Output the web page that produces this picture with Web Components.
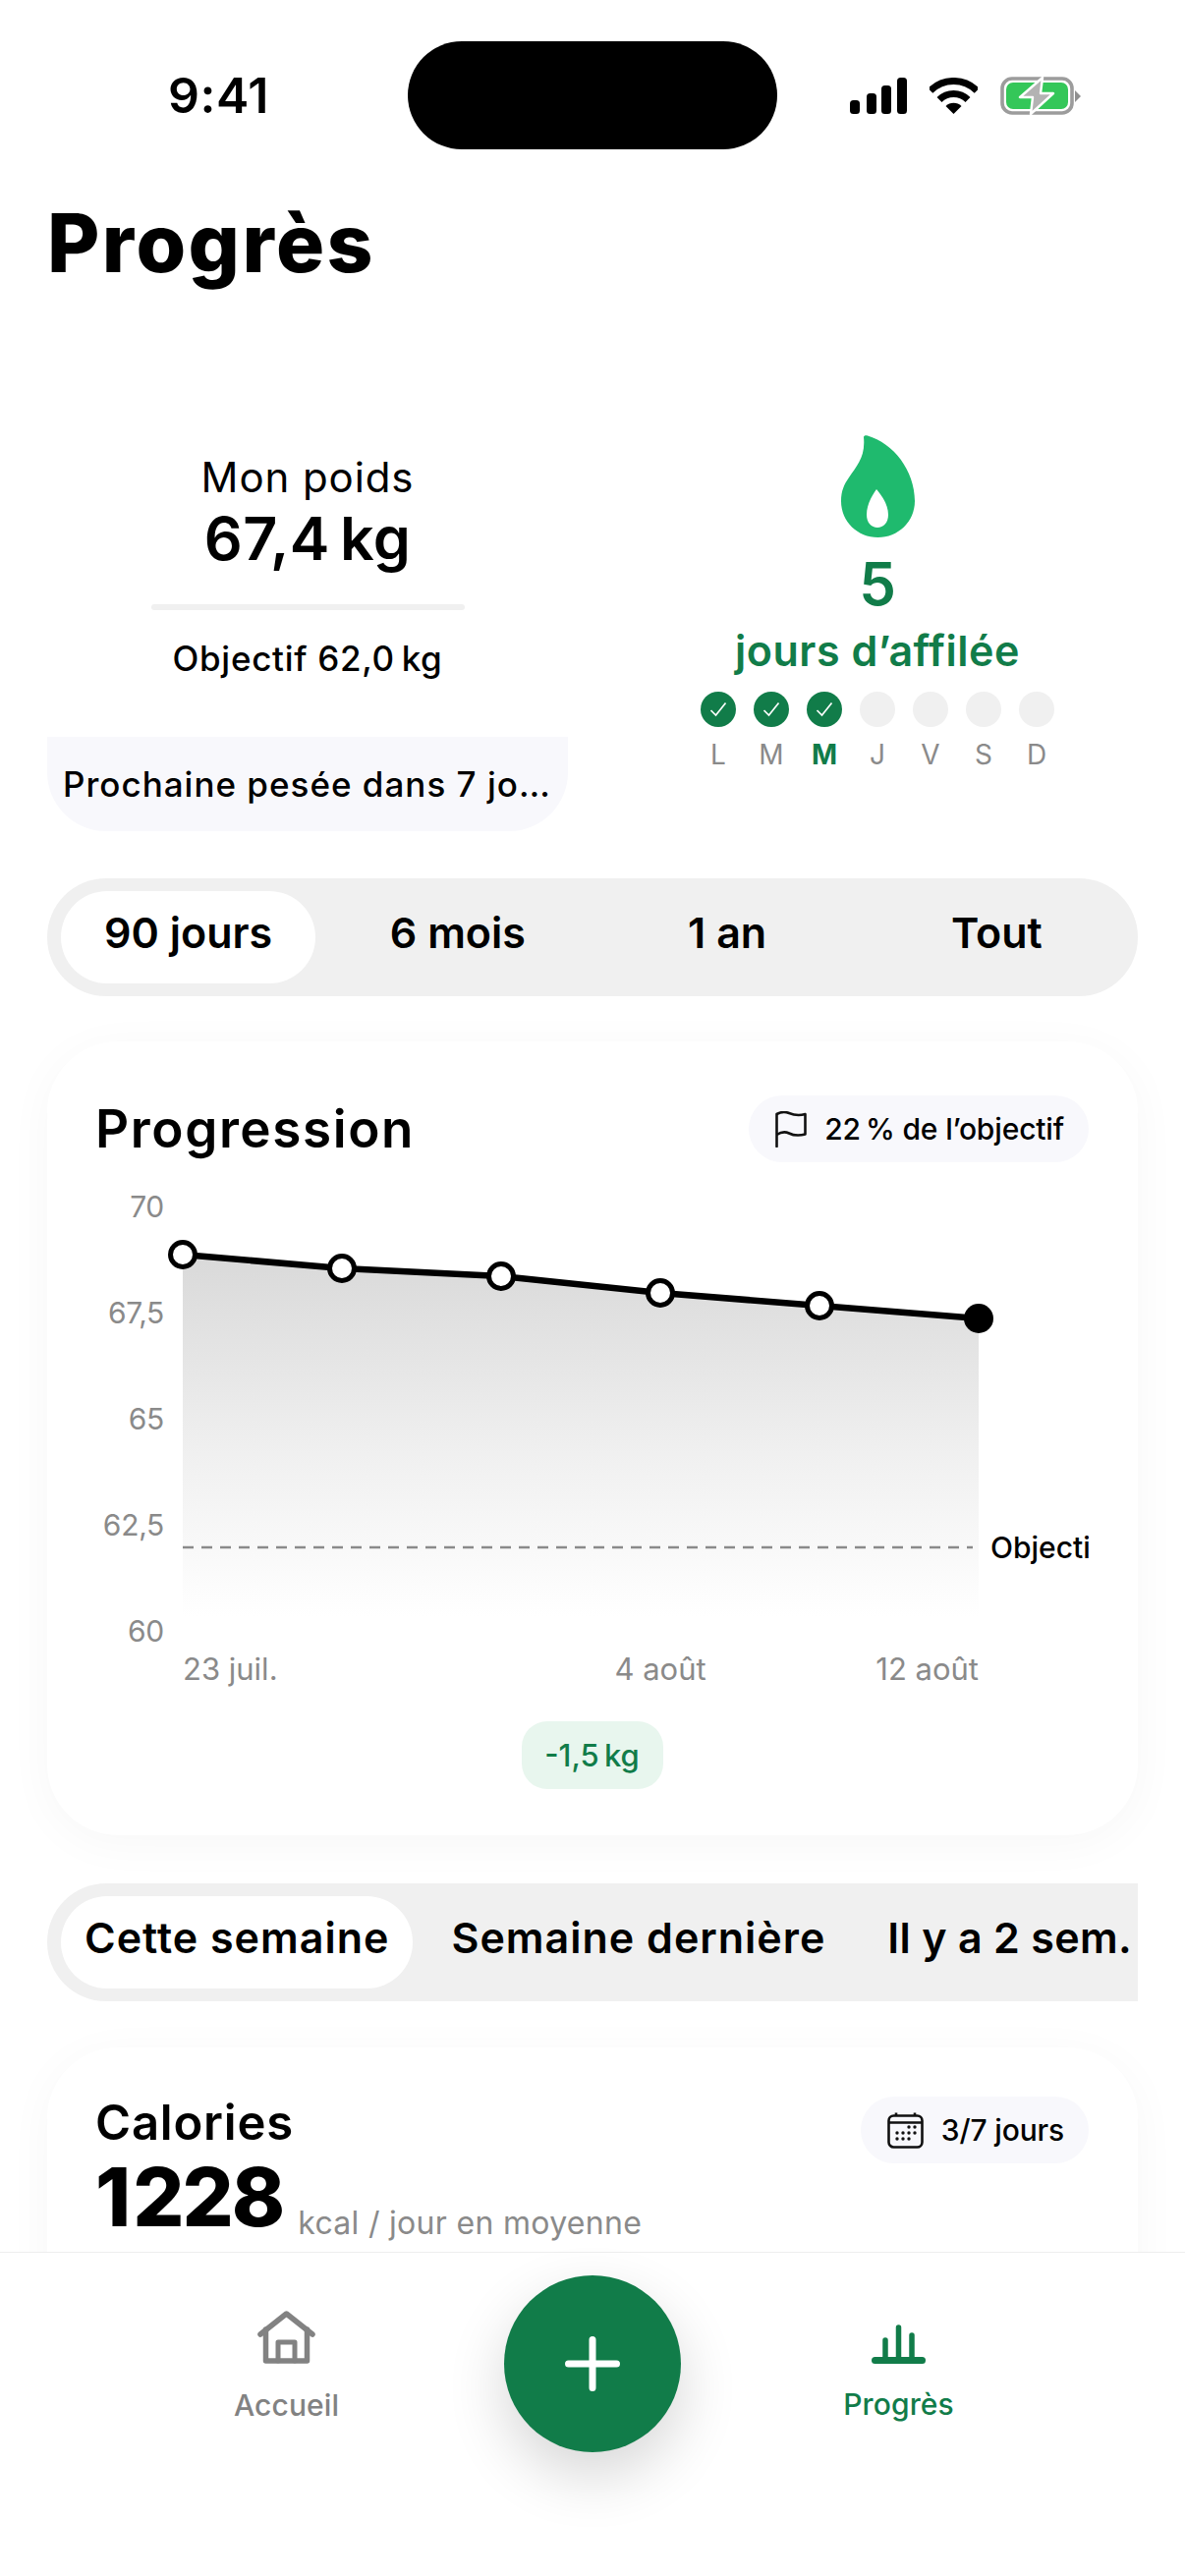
<!DOCTYPE html>
<html lang="fr">
<head>
<meta charset="utf-8">
<title>Progrès</title>
<style>
  html, body { margin: 0; padding: 0; background: #fff; }
  body { font-family: Inter, "Liberation Sans", sans-serif; color: #000; }
</style>
</head>
<body>
<app-screen>
  <app-status-bar></app-status-bar>
  <page-title>Progrès</page-title>
  <summary-row>
    <weight-summary slot="left"></weight-summary>
    <streak-summary slot="right"></streak-summary>
  </summary-row>
  <seg-control items="90 jours|6 mois|1 an|Tout" equal></seg-control>
  <progress-card></progress-card>
  <seg-control items="Cette semaine|Semaine dernière|Il y a 2 sem." style="margin-top:49px"></seg-control>
  <calories-card></calories-card>
  <tab-bar></tab-bar>
</app-screen>

<script>
class BaseComponent extends HTMLElement {
  constructor() {
    super();
    this.attachShadow({ mode: 'open' });
  }

  connectedCallback() {
    this.render();
  }

  render(template) {
    this.shadowRoot.innerHTML = template;
  }
}

class AppScreen extends BaseComponent {
  render() {
    super.render(`
      <style>
        :host {
          display: block;
          position: relative;
          width: 1206px;
          height: 2622px;
          overflow: hidden;
          background: #fff;
        }
      </style>
      <slot></slot>
    `);
  }
}

class AppStatusBar extends BaseComponent {
  render() {
    super.render(`
      <style>
        :host { display: flex; padding-top: 42px; height: 110px; }
        .time {
          width: 415px;
          box-sizing: border-box;
          padding-left: 171px;
          display: flex;
          align-items: center;
          font: 600 50px/110px Inter, sans-serif;
          letter-spacing: 0.5px;
        }
        .island { width: 376px; height: 110px; border-radius: 55px; background: #000; }
        .icons {
          width: 415px;
          box-sizing: border-box;
          padding-left: 74px;
          display: flex;
          align-items: center;
        }
        svg { display: block; }
      </style>
      <div class="time">9:41</div>
      <div class="island"></div>
      <div class="icons">
        <svg width="58" height="37" viewBox="0 0 58 37">
          <rect x="0" y="23" width="10" height="14" rx="3.5"/>
          <rect x="17" y="16" width="10" height="21" rx="3.5"/>
          <rect x="32" y="8" width="10" height="29" rx="3.5"/>
          <rect x="48" y="0" width="10" height="37" rx="3.5"/>
        </svg>
        <svg width="49" height="37" viewBox="0 0 49 37" style="margin-left:23px">
          <path d="M0.8 13.3A33.5 33.5 0 0 1 48.2 13.3" fill="none" stroke="#000" stroke-width="7"/>
          <path d="M10 22.5A20.5 20.5 0 0 1 39 22.5" fill="none" stroke="#000" stroke-width="7"/>
          <path d="M16.5 29A11.3 11.3 0 0 1 32.5 29L24.5 37Z"/>
        </svg>
        <svg width="82" height="39" viewBox="0 0 82 39" style="margin-left:23px">
          <rect x="2" y="2" width="71" height="35" rx="10" fill="#fff" stroke="#9c9c9c" stroke-width="3.6"/>
          <rect x="6" y="6" width="63" height="27" rx="7" fill="#34c759"/>
          <path d="M76 14L82 20L76 26Z" fill="#8f8f8f"/>
          <path d="M43 1L20 21L33 21L31 38L54 17L41 17Z" fill="#b3b3b3" stroke="#fff" stroke-width="2.4" stroke-linejoin="round"/>
        </svg>
      </div>
    `);
  }
}

class PageTitle extends BaseComponent {
  render() {
    super.render(`
      <style>
        :host {
          display: block;
          margin: 46px 0 0 48px;
          font: 800 82px/100px Inter, sans-serif;
          letter-spacing: 2.4px;
        }
      </style>
      <slot></slot>
    `);
  }
}

class SummaryRow extends BaseComponent {
  render() {
    super.render(`
      <style>
        :host {
          display: grid;
          grid-template-columns: 530px 530px;
          column-gap: 50px;
          margin: 145px 48px 0;
        }
      </style>
      <slot name="left"></slot>
      <slot name="right"></slot>
    `);
  }
}

class WeightSummary extends BaseComponent {
  render() {
    super.render(`
      <style>
        :host { display: flex; flex-direction: column; align-items: center; padding-top: 17px; }
        .label { font: 400 42px/52px Inter, sans-serif; letter-spacing: 0.9px; }
        .value { margin-top: 1px; font: 600 61px/70px Inter, sans-serif; letter-spacing: 0.3px; }
        .line { margin-top: 32px; width: 319px; height: 6px; border-radius: 3px; background: #f0f0f0; }
        .goal { margin-top: 27px; font: 450 35px/44px Inter, sans-serif; letter-spacing: 0.7px; }
        .next {
          margin-top: 58px;
          width: 530px;
          height: 96px;
          box-sizing: border-box;
          padding: 0 16px;
          border-radius: 0 0 60px 60px;
          background: #f8f8fc;
          font: 450 35px/96px Inter, sans-serif;
          letter-spacing: 1px;
          white-space: nowrap;
        }
      </style>
      <div class="label">Mon poids</div>
      <div class="value">67,4\u2009kg</div>
      <div class="line"></div>
      <div class="goal">Objectif 62,0\u2009kg</div>
      <div class="next">Prochaine pesée dans 7 jo…</div>
    `);
  }
}

class StreakSummary extends BaseComponent {
  render() {
    const days = ['L', 'M', 'M', 'J', 'V', 'S', 'D'];
    const dots = days.map((d, i) => `<span class="dot ${i < 3 ? 'on' : ''}">${i < 3
      ? '<svg width="18" height="16" viewBox="0 0 18 16"><path d="M1.5 9L6.5 14L16.5 1.5" fill="none" stroke="#fff" stroke-width="1.7"/></svg>'
      : ''}</span>`).join('');
    const labels = days.map((d, i) => `<span class="${i === 2 ? 'today' : ''}">${d}</span>`).join('');

    super.render(`
      <style>
        :host { display: flex; flex-direction: column; align-items: center; color: #117c49; }
        svg { display: block; }
        .count { margin-top: 12px; font: 600 60px/70px Inter, sans-serif; }
        .text { margin-top: 7px; font: 600 43px/52px Inter, sans-serif; letter-spacing: 0.5px; white-space: nowrap; }
        .grid { display: grid; grid-template-columns: repeat(7, 36px); column-gap: 18px; }
        .dots { margin-top: 16px; }
        .dot {
          width: 36px;
          height: 36px;
          border-radius: 50%;
          background: #f0f0f0;
          display: flex;
          align-items: center;
          justify-content: center;
        }
        .dot.on { background: #117c49; }
        .labels {
          margin-top: 11px;
          text-align: center;
          font: 400 28px/34px Inter, sans-serif;
          color: #8a8a8a;
        }
        .today { color: #117c49; font-weight: 700; }
      </style>
      <svg width="75" height="104" viewBox="0 0 75 104">
        <path fill="#1fba6e" fill-rule="evenodd" d="M23 2C23 .5 25 0 27 .6C53 8 75 36 75 67C75 88 58 104 37.5 104C17 104 0 88 0 67C0 57 3 50 8 43C16 31 25 22 23 2ZM36 55C31 62 26 71 26 81C26 89 31 94 37 94C43 94 48 89 48 81C48 71 42 62 36 55Z"/>
      </svg>
      <div class="count">5</div>
      <div class="text">jours d’affilée</div>
      <div class="grid dots">${dots}</div>
      <div class="grid labels">${labels}</div>
    `);
  }
}

class SegControl extends BaseComponent {
  render() {
    const items = this.getAttribute('items').split('|');
    const equal = this.hasAttribute('equal');
    const tabs = items.map((t, i) => `<div class="tab ${i === 0 ? 'active' : ''}">${t}</div>`).join('');

    super.render(`
      <style>
        :host {
          display: block;
          margin: 48px 48px 0;
          height: 120px;
          box-sizing: border-box;
          background: #f0f0f0;
          border-radius: ${equal ? '60px' : '60px 0 0 60px'};
          overflow: hidden;
        }
        .row {
          display: flex;
          gap: 15px;
          padding: 13px 14px;
          white-space: nowrap;
        }
        .tab {
          flex: ${equal ? '1 1 0' : '0 0 auto'};
          height: 94px;
          box-sizing: border-box;
          padding: 0 ${equal ? '0' : '24px'};
          border-radius: 47px;
          text-align: center;
          font: 600 43px/84px Inter, sans-serif;
          letter-spacing: ${equal ? '0' : '1px'};
        }
        .tab:nth-child(3) { letter-spacing: ${equal ? '0' : '0.3px'}; }
        .active { background: #fff; }
      </style>
      <div class="row">${tabs}</div>
    `);
  }
}

class InfoChip extends BaseComponent {
  render() {
    super.render(`
      <style>
        :host {
          display: inline-flex;
          align-items: center;
          height: 68px;
          box-sizing: border-box;
          padding: 0 25px 0 27px;
          gap: 18px;
          border-radius: 34px;
          background: #f8f8fc;
          font: 450 30px/68px Inter, sans-serif;
          letter-spacing: -0.15px;
          white-space: nowrap;
        }
        ::slotted(svg) { display: block; }
      </style>
      <slot name="icon"></slot>
      <slot></slot>
    `);
  }
}

class ProgressCard extends BaseComponent {
  render() {
    const pts = [[186, 1277], [348, 1291], [510, 1299], [672, 1316], [834, 1329], [996, 1342]];
    const line = pts.map(p => p.join(',')).join(' ');
    const circles = pts.map((p, i) => `<circle cx="${p[0]}" cy="${p[1]}" r="${i === 5 ? 15 : 12.5}" fill="${i === 5 ? '#000' : '#fff'}" stroke="#000" stroke-width="${i === 5 ? 0 : 5}"/>`).join('');
    const ticks = [['70', 1229], ['67,5', 1337], ['65', 1445], ['62,5', 1553], ['60', 1661]]
      .map(t => `<text x="167" y="${t[1] + 10}" text-anchor="end" class="tick">${t[0]}</text>`).join('');

    super.render(`
      <style>
        :host {
          display: block;
          margin: 46px 48px 0;
          height: 808px;
          box-sizing: border-box;
          padding: 55px 50px 0 49px;
          border-radius: 72px;
          background: #fff;
          box-shadow: 0 8px 48px rgba(0, 0, 0, .035);
        }
        .head { display: flex; align-items: center; justify-content: space-between; }
        h2 { margin: 0; font: 600 53px/68px Inter, sans-serif; letter-spacing: 1.6px; }
        .chart { display: block; margin-top: 12px; }
        text { font-family: Inter, sans-serif; }
        .tick { font-size: 30px; letter-spacing: -0.3px; fill: #8a8a8a; }
        .axis { font-size: 31px; fill: #8a8a8a; }
        .goal { font-size: 30px; font-weight: 450; fill: #000; }
        .delta {
          display: block;
          margin: 22px auto 0;
          width: 144px;
          height: 69px;
          border-radius: 26px;
          background: #e8f6ee;
          color: #117c49;
          text-align: center;
          font: 450 31px/69px Inter, sans-serif;
          white-space: nowrap;
        }
      </style>
      <div class="head">
        <h2>Progression</h2>
        <info-chip>
          <svg slot="icon" width="32" height="37" viewBox="0 0 32 37" fill="none" stroke="#111" stroke-width="2.6" stroke-linejoin="round" stroke-linecap="round">
            <path d="M1.5 36V3C6 .5 10 .5 14 2C19 4 25 4.5 30.5 3V23.500C25 25 19 25 14 22.500C10 20.500 6 21 1.5 24"/>
          </svg>
          22\u2009% de l’objectif
        </info-chip>
      </div>
      <svg class="chart" width="1011" height="535" viewBox="97 1195 1011 535">
        <defs>
          <linearGradient id="area" x1="0" y1="0" x2="0" y2="1">
            <stop offset="0" stop-color="#d9d9d9"/>
            <stop offset="0.55" stop-color="#f0f0f0"/>
            <stop offset="1" stop-color="#ffffff"/>
          </linearGradient>
        </defs>
        ${ticks}
        <polygon points="186,1646 ${line} 996,1646" fill="url(#area)"/>
        <line x1="186" y1="1575" x2="990" y2="1575" stroke="#8a8a8a" stroke-width="2.500" stroke-dasharray="11 8"/>
        <polyline points="${line}" fill="none" stroke="#000" stroke-width="6.500"/>
        ${circles}
        <text x="1008" y="1586" class="goal">Objectif</text>
        <text x="186" y="1710" class="axis">23 juil.</text>
        <text x="672" y="1710" text-anchor="middle" class="axis">4 août</text>
        <text x="996" y="1710" text-anchor="end" class="axis">12 août</text>
      </svg>
      <span class="delta">-1,5\u2009kg</span>
    `);
  }
}

class CaloriesCard extends BaseComponent {
  render() {
    const dots = [[22, 15], [28, 15], [10, 21], [16, 21], [22, 21], [28, 21], [10, 27], [16, 27], [22, 27]]
      .map(d => `<circle cx="${d[0]}" cy="${d[1]}" r="1.700" fill="#111" stroke="none"/>`).join('');

    super.render(`
      <style>
        :host {
          display: block;
          margin: 47px 48px 0;
          height: 400px;
          box-sizing: border-box;
          padding: 47px 50px 0 49px;
          border-radius: 72px;
          background: #fff;
          box-shadow: 0 8px 48px rgba(0, 0, 0, .035);
        }
        .head { display: flex; align-items: flex-start; justify-content: space-between; }
        h2 { margin: 0; font: 600 49px/60px Inter, sans-serif; letter-spacing: 0.8px; }
        info-chip { margin-top: 3px; }
        .stat { display: flex; align-items: flex-end; gap: 15px; margin-top: -15px; }
        .num { font: 800 82px/100px Inter, sans-serif; letter-spacing: -2px; white-space: nowrap; }
        .unit { margin-bottom: 4px; font: 400 32px/40px Inter, sans-serif; color: #8a8a8a; letter-spacing: 0.3px; white-space: nowrap; }
      </style>
      <div class="head">
        <h2>Calories</h2>
        <info-chip>
          <svg slot="icon" width="37" height="37" viewBox="0 0 37 37" fill="none" stroke="#111" stroke-width="2.600">
            <rect x="1.500" y="3.500" width="34" height="32" rx="5"/>
            <path d="M1.500 10.500H35.500M9 0.500V4M28 0.500V4"/>
            ${dots}
          </svg>
          3/7 jours
        </info-chip>
      </div>
      <div class="stat">
        <div class="num">1\u200a228</div>
        <div class="unit">kcal / jour en moyenne</div>
      </div>
    `);
  }
}

class TabBar extends BaseComponent {
  render() {
    super.render(`
      <style>
        :host {
          position: absolute;
          left: 0;
          right: 0;
          bottom: 0;
          height: 330px;
          box-sizing: border-box;
          padding: 0 70px;
          display: grid;
          grid-template-columns: 1fr 180px 1fr;
          background: #fff;
          border-top: 1px solid #eeeeee;
        }
        .item {
          display: flex;
          flex-direction: column;
          align-items: center;
          padding-top: 57px;
          color: #828282;
        }
        .item.on { color: #117c49; }
        .icon { height: 56px; display: flex; align-items: flex-end; }
        .icon svg { display: block; }
        .label { margin-top: 21px; font: 500 30px/38px Inter, sans-serif; letter-spacing: 0.1px; }
        .on .label { margin-top: 22px; }
        .fab {
          margin-top: 23px;
          width: 180px;
          height: 180px;
          border-radius: 50%;
          background: #117c49;
          box-shadow: 0 24px 60px rgba(0, 0, 0, .16);
          display: flex;
          align-items: center;
          justify-content: center;
        }
      </style>
      <div class="item">
        <div class="icon" style="padding-bottom:2px">
          <svg width="59" height="54" viewBox="0 0 59 54" fill="none" stroke="currentColor" stroke-width="5.500" stroke-linecap="round" stroke-linejoin="round">
            <path d="M3 24L29.500 3L56 24"/>
            <path d="M8.500 19V51H50.500V19"/>
            <path d="M21 51V32H38V51" stroke-width="5"/>
          </svg>
        </div>
        <div class="label">Accueil</div>
      </div>
      <div class="fab">
        <svg width="56" height="56" viewBox="0 0 56 56" stroke="#fff" stroke-width="7" stroke-linecap="round">
          <path d="M28 3.500V52.500M3.500 28H52.500"/>
        </svg>
      </div>
      <div class="item on">
        <div class="icon">
          <svg width="55" height="40" viewBox="0 0 55 40" stroke="currentColor" stroke-linecap="round">
            <path d="M3.500 36.500H51.500" stroke-width="7"/>
            <path d="M14 34V16M27.500 34V3M41 34V11" stroke-width="5.500"/>
          </svg>
        </div>
        <div class="label">Progrès</div>
      </div>
    `);
  }
}

window.customElements.define('app-screen', AppScreen);
window.customElements.define('app-status-bar', AppStatusBar);
window.customElements.define('page-title', PageTitle);
window.customElements.define('summary-row', SummaryRow);
window.customElements.define('weight-summary', WeightSummary);
window.customElements.define('streak-summary', StreakSummary);
window.customElements.define('seg-control', SegControl);
window.customElements.define('info-chip', InfoChip);
window.customElements.define('progress-card', ProgressCard);
window.customElements.define('calories-card', CaloriesCard);
window.customElements.define('tab-bar', TabBar);
</script>
</body>
</html>
